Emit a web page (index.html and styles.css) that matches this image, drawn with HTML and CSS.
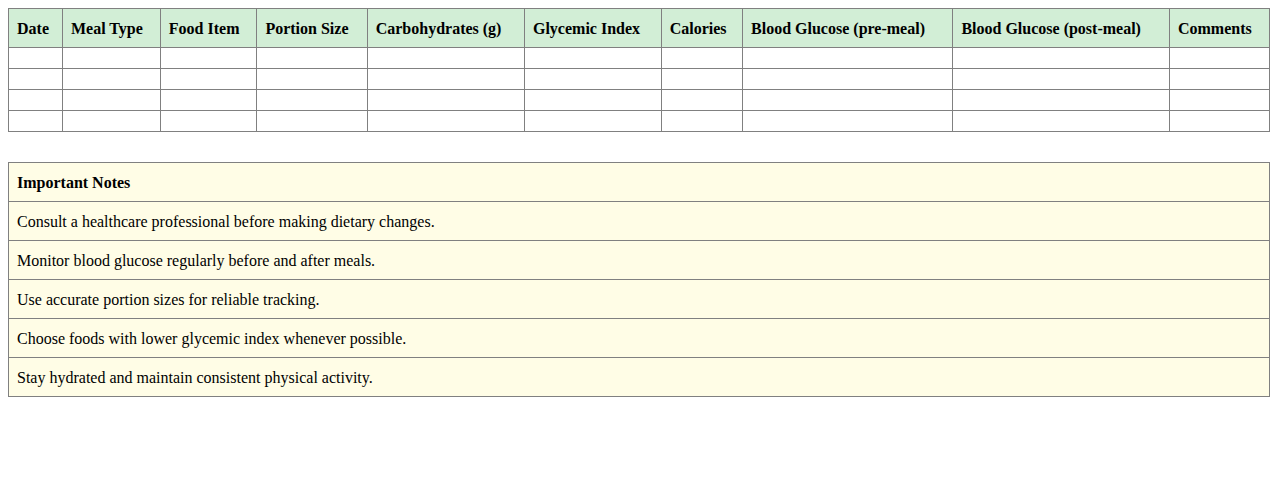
FILE: index.html
```html
<!DOCTYPE html>
<html>
<head>
<meta charset="utf-8">
<link rel="stylesheet" href="styles.css">
</head>
<body>
<table class="log">
  <thead>
    <tr>
      <th>Date</th>
      <th>Meal Type</th>
      <th>Food Item</th>
      <th>Portion Size</th>
      <th>Carbohydrates (g)</th>
      <th>Glycemic Index</th>
      <th>Calories</th>
      <th>Blood Glucose (pre-meal)</th>
      <th>Blood Glucose (post-meal)</th>
      <th>Comments</th>
    </tr>
  </thead>
  <tbody>
    <tr><td></td><td></td><td></td><td></td><td></td><td></td><td></td><td></td><td></td><td></td></tr>
    <tr><td></td><td></td><td></td><td></td><td></td><td></td><td></td><td></td><td></td><td></td></tr>
    <tr><td></td><td></td><td></td><td></td><td></td><td></td><td></td><td></td><td></td><td></td></tr>
    <tr><td></td><td></td><td></td><td></td><td></td><td></td><td></td><td></td><td></td><td></td></tr>
  </tbody>
</table>
<table class="notes">
  <tr><th>Important Notes</th></tr>
  <tr><td>Consult a healthcare professional before making dietary changes.</td></tr>
  <tr><td>Monitor blood glucose regularly before and after meals.</td></tr>
  <tr><td>Use accurate portion sizes for reliable tracking.</td></tr>
  <tr><td>Choose foods with lower glycemic index whenever possible.</td></tr>
  <tr><td>Stay hydrated and maintain consistent physical activity.</td></tr>
</table>
</body>
</html>
```

FILE: styles.css
```css
body {
  margin: 8px;
  font-family: "Liberation Serif", "Times New Roman", serif;
  font-size: 16px;
  color: #000;
  background: #fff;
}
table {
  width: 100%;
  border-collapse: collapse;
}
th, td {
  border: 1px solid #808080;
  padding: 11px 8px 9px;
  text-align: left;
  line-height: 18px;
}
th {
  font-weight: bold;
}
.log th {
  background: #d2eed6;
}
.notes {
  margin-top: 30px;
}
.notes th, .notes td {
  background: #fffde6;
}
.notes td {
  font-weight: normal;
}
```
